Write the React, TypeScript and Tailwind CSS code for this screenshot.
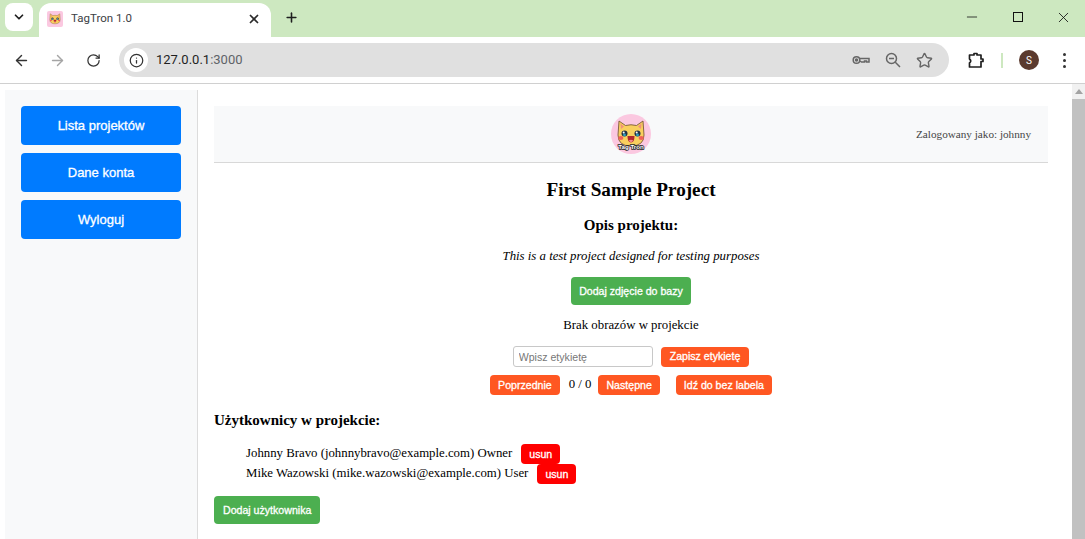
import React from "react";
import { ArrowLeft, ArrowRight, ChevronDown, Info, Minus, Plus, RotateCw, Star, X } from "lucide-react";

function CatLogo({ size, withText = true }: { size: number; withText?: boolean }) {
  return (
    <svg width={size} height={size} viewBox="0 0 40 40" className="block">
      <circle cx="20" cy="20" r="20" fill="#fbc8e0" />
      <path d="M8 7 L14.500 11.500 Q20 10 25.500 11.500 L32 7 L33 21 Q33 32 20 32 Q7 32 7 21 Z" fill="#f9cf5e" stroke="#7a5a3a" strokeWidth="0.900" strokeLinejoin="round" />
      <path d="M9.500 9.500 L13 12.500 L10 15 Z M30.500 9.500 L27 12.500 L30 15 Z" fill="#f0917c" />
      <circle cx="13.500" cy="19.500" r="3" fill="#243044" />
      <circle cx="26.500" cy="19.500" r="3" fill="#243044" />
      <circle cx="13.500" cy="21" r="1.400" fill="#2f9fc0" />
      <circle cx="26.500" cy="21" r="1.400" fill="#2f9fc0" />
      <circle cx="12.700" cy="18.400" r="1" fill="#fff" />
      <circle cx="25.700" cy="18.400" r="1" fill="#fff" />
      <ellipse cx="9.800" cy="24" rx="2.600" ry="1.900" fill="#f0605a" />
      <ellipse cx="30.200" cy="24" rx="2.600" ry="1.900" fill="#f0605a" />
      <path d="M16.500 22 H23.500 Q23.500 28.500 20 28.500 Q16.500 28.500 16.500 22 Z" fill="#b3262c" />
      <path d="M17.800 26.500 Q20 25 22.200 26.500 Q21 28.300 20 28.300 Q19 28.300 17.800 26.500 Z" fill="#f58a8a" />
      {withText && (
        <text
          x="20"
          y="34.500"
          textAnchor="middle"
          fontSize="6.200"
          fontWeight="700"
          fill="#fff"
          stroke="#222"
          strokeWidth="1.500"
          paintOrder="stroke"
          fontFamily="Liberation Sans, sans-serif"
        >
          Tag Tron
        </text>
      )}
    </svg>
  );
}

function BrowserChrome() {
  return (
    <div className="shrink-0 font-['Roboto',sans-serif]">
      <div className="flex h-[37px] items-end bg-[#cde8c0] pl-[5px]">
        <div className="mb-[6px] flex h-[28px] w-[28px] items-center justify-center rounded-lg bg-white text-[#1f1f1f]">
          <ChevronDown size={14} strokeWidth={3} />
        </div>
        <div className="ml-[6px] flex h-[34px] w-[232px] items-center rounded-t-xl bg-white pl-[8px] pr-[10px] pb-[2px]">
          <div className="h-[16px] w-[16px] overflow-hidden rounded-[2px] bg-[#fbc8e0]">
            <CatLogo size={16} withText={false} />
          </div>
          <span className="ml-[8px] text-[11.5px] text-[#3c4043]">TagTron 1.0</span>
          <X size={14} strokeWidth={3} className="ml-auto text-[#2b2b2b]" />
        </div>
        <div className="mb-[6px] ml-[6px] flex h-[28px] w-[28px] items-center justify-center text-[#1f1f1f]">
          <Plus size={15} strokeWidth={2.500} />
        </div>
        <div className="mb-[5px] ml-auto flex h-[30px] items-center text-[#111]">
          <div className="flex w-[46px] justify-center"><Minus size={16} strokeWidth={1.200} /></div>
          <div className="flex w-[46px] justify-center"><div className="h-[10px] w-[10px] border border-[#111]" /></div>
          <div className="flex w-[44px] justify-center"><X size={17} strokeWidth={1.200} /></div>
        </div>
      </div>
      <div className="flex h-[47px] items-center border-b border-[#d0d0d0] bg-white pl-[7px]">
        <div className="flex w-[28px] justify-center text-[#333]"><ArrowLeft size={17} strokeWidth={2} /></div>
        <div className="ml-[8px] flex w-[28px] justify-center text-[#a5a5a5]"><ArrowRight size={17} strokeWidth={2} /></div>
        <div className="ml-[8px] flex w-[28px] justify-center text-[#333]"><RotateCw size={15} strokeWidth={2} /></div>
        <div className="ml-[12px] flex h-[34px] w-[830px] items-center rounded-full bg-[#e0e0e0] pl-[5px] pr-[16px]">
          <div className="flex h-[24px] w-[24px] items-center justify-center rounded-full bg-white text-[#333]">
            <Info size={15} strokeWidth={2} />
          </div>
          <span className="ml-[8px] text-[13px] text-[#1f1f1f]">
            127.0.0.1<span className="text-[#5f6368]">:3000</span>
          </span>
          <div className="ml-auto flex items-center gap-[15px] text-[#666]">
            <svg width="18" height="18" viewBox="0 0 18 18" fill="none" stroke="currentColor" strokeWidth="1.500">
              <circle cx="4.500" cy="9" r="3.300" />
              <circle cx="4.500" cy="9" r="1" fill="currentColor" />
              <path d="M8 7.500 H17 V11 H14.500 V10 H12.500 V11 H9.500 L8 10" />
            </svg>
            <svg width="16" height="16" viewBox="0 0 16 16" fill="none" stroke="currentColor" strokeWidth="1.500">
              <circle cx="6.500" cy="6.500" r="5" />
              <path d="M4 6.500 H9 M10.300 10.300 L15 15" />
            </svg>
            <Star size={17} strokeWidth={2} />
          </div>
        </div>
        <div className="ml-[18px] text-[#1f1f1f]">
          <svg width="18" height="18" viewBox="0 0 18 18" fill="none" stroke="currentColor" strokeWidth="1.700" strokeLinejoin="round">
            <path d="M2.500 4 H7 V2.500 H10 V4 H14 V8 H16 V10.500 H14 V16 H2.500 V12 Q5 10 2.500 8 Z" />
          </svg>
        </div>
        <div className="ml-[16px] h-[15px] w-[2px] bg-[#cde8c0]" />
        <div className="ml-[16px] flex h-[20px] w-[20px] items-center justify-center rounded-full bg-[#5b3a2e] text-[10px] text-white">S</div>
        <div className="ml-[24px] flex flex-col gap-[3px]">
          <span className="h-[3px] w-[3px] rounded-full bg-[#333]" />
          <span className="h-[3px] w-[3px] rounded-full bg-[#333]" />
          <span className="h-[3px] w-[3px] rounded-full bg-[#333]" />
        </div>
      </div>
    </div>
  );
}

function SideButton({ label }: { label: string }) {
  return (
    <button className="h-[39px] w-[160px] rounded-[4px] bg-[#007bff] font-['Liberation_Sans',sans-serif] text-[13px] text-white [-webkit-text-stroke:0.3px_white]">
      {label}
    </button>
  );
}

function SmallButton({ label, color, wide = false, className = "" }: { label: string; color: "green" | "orange" | "red"; wide?: boolean; className?: string }) {
  const colors = { green: "bg-[#4caf50] h-[28px]", orange: "bg-[#ff5722] h-[20px]", red: "bg-[#ff0000] h-[20px]" };
  return (
    <button className={`rounded-[4px] font-['Liberation_Sans',sans-serif] text-[10.6px] leading-none text-white [-webkit-text-stroke:0.3px_white] ${wide ? "px-[9px]" : "px-[8px]"} ${colors[color]} ${className}`}>
      {label}
    </button>
  );
}

export default function App() {
  return (
    <div className="flex h-[539px] w-[1085px] flex-col overflow-hidden bg-white font-['Liberation_Serif',serif] text-black">
      <BrowserChrome />
      <div className="flex min-h-0 flex-1">
        <div className="flex min-w-0 flex-1 pl-[5px] pt-[6px]">
          <aside className="flex w-[193px] shrink-0 flex-col gap-[8px] border-r border-[#dcdcdc] bg-[#f8f9fa] pl-[16px] pt-[16px]">
            <SideButton label="Lista projektów" />
            <SideButton label="Dane konta" />
            <SideButton label="Wyloguj" />
          </aside>
          <main className="min-w-0 flex-1 pl-[16px] pr-[24px] pt-[16px]">
            <header className="relative flex h-[57px] items-center justify-center border-b border-[#d8d8d8] bg-[#f8f9fa]">
              <CatLogo size={40} />
              <span className="absolute right-[17px] text-[11.2px] text-[#444]">Zalogowany jako: johnny</span>
            </header>
            <div className="flex flex-col items-center">
              <h1 className="mt-[16px] text-[19.2px] leading-[22px] font-bold">First Sample Project</h1>
              <h2 className="mt-[15px] text-[15px] leading-[18px] font-bold">Opis projektu:</h2>
              <p className="mt-[15px] text-[12.8px] leading-[14px] italic">This is a test project designed for testing purposes</p>
              <SmallButton label="Dodaj zdjęcie do bazy" color="green" className="mt-[14px]" />
              <p className="mt-[13px] text-[12.8px] leading-[14px]">Brak obrazów w projekcie</p>
              <div className="mt-[14px] flex items-center gap-[8px]">
                <input
                  placeholder="Wpisz etykietę"
                  className="h-[21px] w-[140px] rounded-[3px] border border-[#c8c8c8] px-[5px] font-['Liberation_Sans',sans-serif] text-[10.6px] placeholder:text-[#777]"
                />
                <SmallButton label="Zapisz etykietę" color="orange" wide />
              </div>
              <div className="mt-[8px] flex items-center">
                <SmallButton label="Poprzednie" color="orange" />
                <span className="ml-[9px] text-[12.8px]">0 / 0</span>
                <SmallButton label="Następne" color="orange" className="ml-[7px]" />
                <SmallButton label="Idź do bez labela" color="orange" className="ml-[16px]" />
              </div>
            </div>
            <h3 className="mt-[16px] text-[15px] leading-[18px] font-bold">Użytkownicy w projekcie:</h3>
            <ul className="mt-[15px] pl-[32px] text-[12.8px]">
              <li className="flex h-[20px] items-center">
                Johnny Bravo (johnnybravo@example.com) Owner
                <SmallButton label="usun" color="red" className="ml-[9px]" />
              </li>
              <li className="flex h-[20px] items-center">
                Mike Wazowski (mike.wazowski@example.com) User
                <SmallButton label="usun" color="red" className="ml-[9px]" />
              </li>
            </ul>
            <SmallButton label="Dodaj użytkownika" color="green" wide className="mt-[12px]" />
          </main>
        </div>
        <div className="flex w-[13px] shrink-0 flex-col items-center bg-[#f1f1f1]">
          <div className="mt-[5px] h-0 w-0 border-x-[4px] border-b-[5px] border-x-transparent border-b-[#a3a3a3]" />
          <div className="mt-[5px] h-full w-full bg-[#c1c1c1]" />
        </div>
      </div>
    </div>
  );
}
